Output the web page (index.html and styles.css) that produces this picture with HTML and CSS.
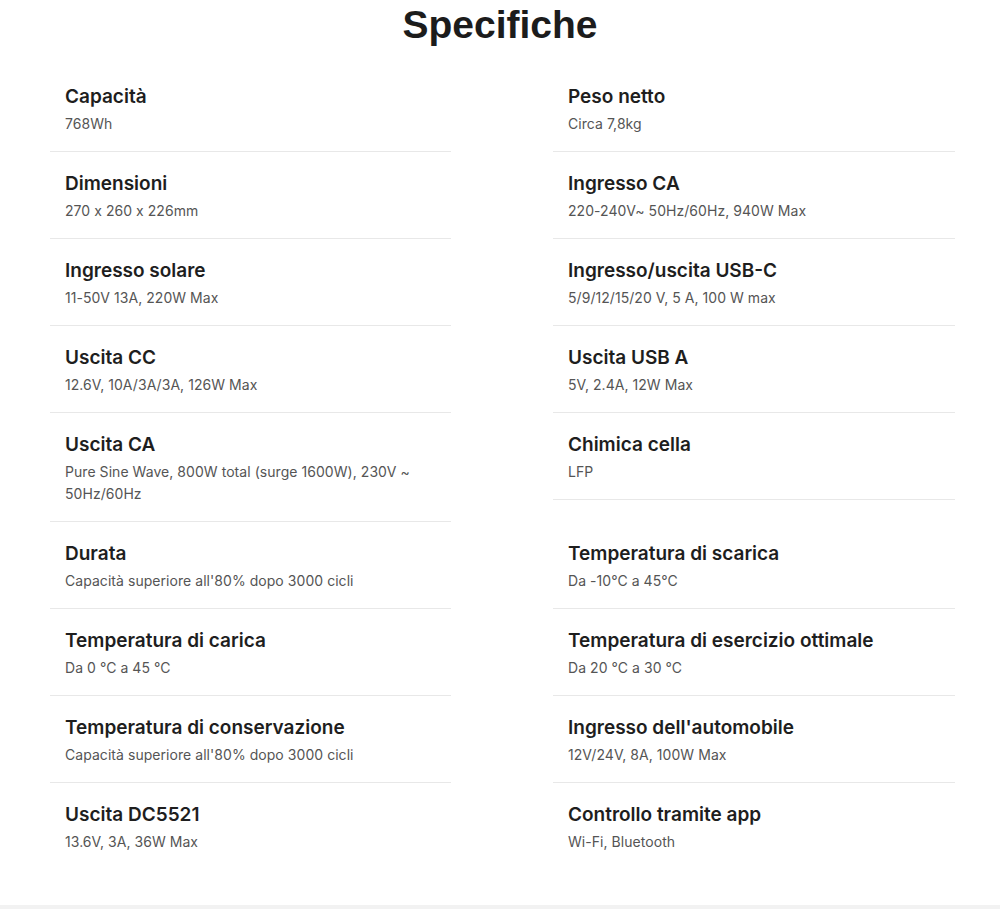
FILE: index.html
```html
<!DOCTYPE html>
<html lang="it">
<head>
<meta charset="utf-8">
<title>Specifiche</title>
<link rel="stylesheet" href="styles.css">
</head>
<body>
<div class="page">
  <h1 class="title">Specifiche</h1>
  <div class="specs">
    <div class="cell"><div class="label">Capacità</div><div class="value">768Wh</div></div>
    <div class="cell"><div class="label">Peso netto</div><div class="value">Circa 7,8kg</div></div>
    <div class="cell"><div class="label">Dimensioni</div><div class="value">270 x 260 x 226mm</div></div>
    <div class="cell"><div class="label">Ingresso CA</div><div class="value">220-240V~ 50Hz/60Hz, 940W Max</div></div>
    <div class="cell"><div class="label">Ingresso solare</div><div class="value">11-50V 13A, 220W Max</div></div>
    <div class="cell"><div class="label">Ingresso/uscita USB-C</div><div class="value">5/9/12/15/20 V, 5 A, 100 W max</div></div>
    <div class="cell"><div class="label">Uscita CC</div><div class="value">12.6V, 10A/3A/3A, 126W Max</div></div>
    <div class="cell"><div class="label">Uscita USB A</div><div class="value">5V, 2.4A, 12W Max</div></div>
    <div class="cell"><div class="label">Uscita CA</div><div class="value">Pure Sine Wave, 800W total (surge 1600W), 230V ~<br>50Hz/60Hz</div></div>
    <div class="cell"><div class="label">Chimica cella</div><div class="value">LFP</div></div>
    <div class="cell"><div class="label">Durata</div><div class="value">Capacità superiore all'80% dopo 3000 cicli</div></div>
    <div class="cell"><div class="label">Temperatura di scarica</div><div class="value">Da -10°C a 45°C</div></div>
    <div class="cell"><div class="label">Temperatura di carica</div><div class="value">Da 0 °C a 45 °C</div></div>
    <div class="cell"><div class="label">Temperatura di esercizio ottimale</div><div class="value">Da 20 °C a 30 °C</div></div>
    <div class="cell"><div class="label">Temperatura di conservazione</div><div class="value">Capacità superiore all'80% dopo 3000 cicli</div></div>
    <div class="cell"><div class="label">Ingresso dell'automobile</div><div class="value">12V/24V, 8A, 100W Max</div></div>
    <div class="cell last"><div class="label">Uscita DC5521</div><div class="value">13.6V, 3A, 36W Max</div></div>
    <div class="cell last"><div class="label">Controllo tramite app</div><div class="value">Wi-Fi, Bluetooth</div></div>
  </div>
</div>
</body>
</html>
```
FILE: styles.css
```css
html, body {
  margin: 0;
  padding: 0;
  background: #ffffff;
}
.page {
  height: 905px;
  border-bottom: 4px solid #f2f2f2;
  box-sizing: content-box;
}
.title {
  margin: 0;
  padding-top: 4px;
  font-family: "Liberation Sans", Arial, sans-serif;
  font-weight: 700;
  font-size: 39px;
  line-height: 42px;
  color: #1c1c1c;
  text-align: center;
  height: 65px;
  box-sizing: border-box;
}
.specs {
  display: grid;
  grid-template-columns: 401px 402px;
  column-gap: 102px;
  align-items: start;
  margin-left: 50px;
  font-family: Inter, "Noto Sans", sans-serif;
}
.cell {
  padding: 20px 0 16px 15px;
  border-bottom: 1px solid #e8e8e8;
}
.cell.last {
  border-bottom: none;
}
.label {
  font-size: 19px;
  line-height: 24px;
  font-weight: 600;
  color: #1e1e1e;
  letter-spacing: 0;
}
.value {
  margin-top: 4px;
  font-size: 14px;
  line-height: 22px;
  color: #555555;
  letter-spacing: 0.05px;
}
```
